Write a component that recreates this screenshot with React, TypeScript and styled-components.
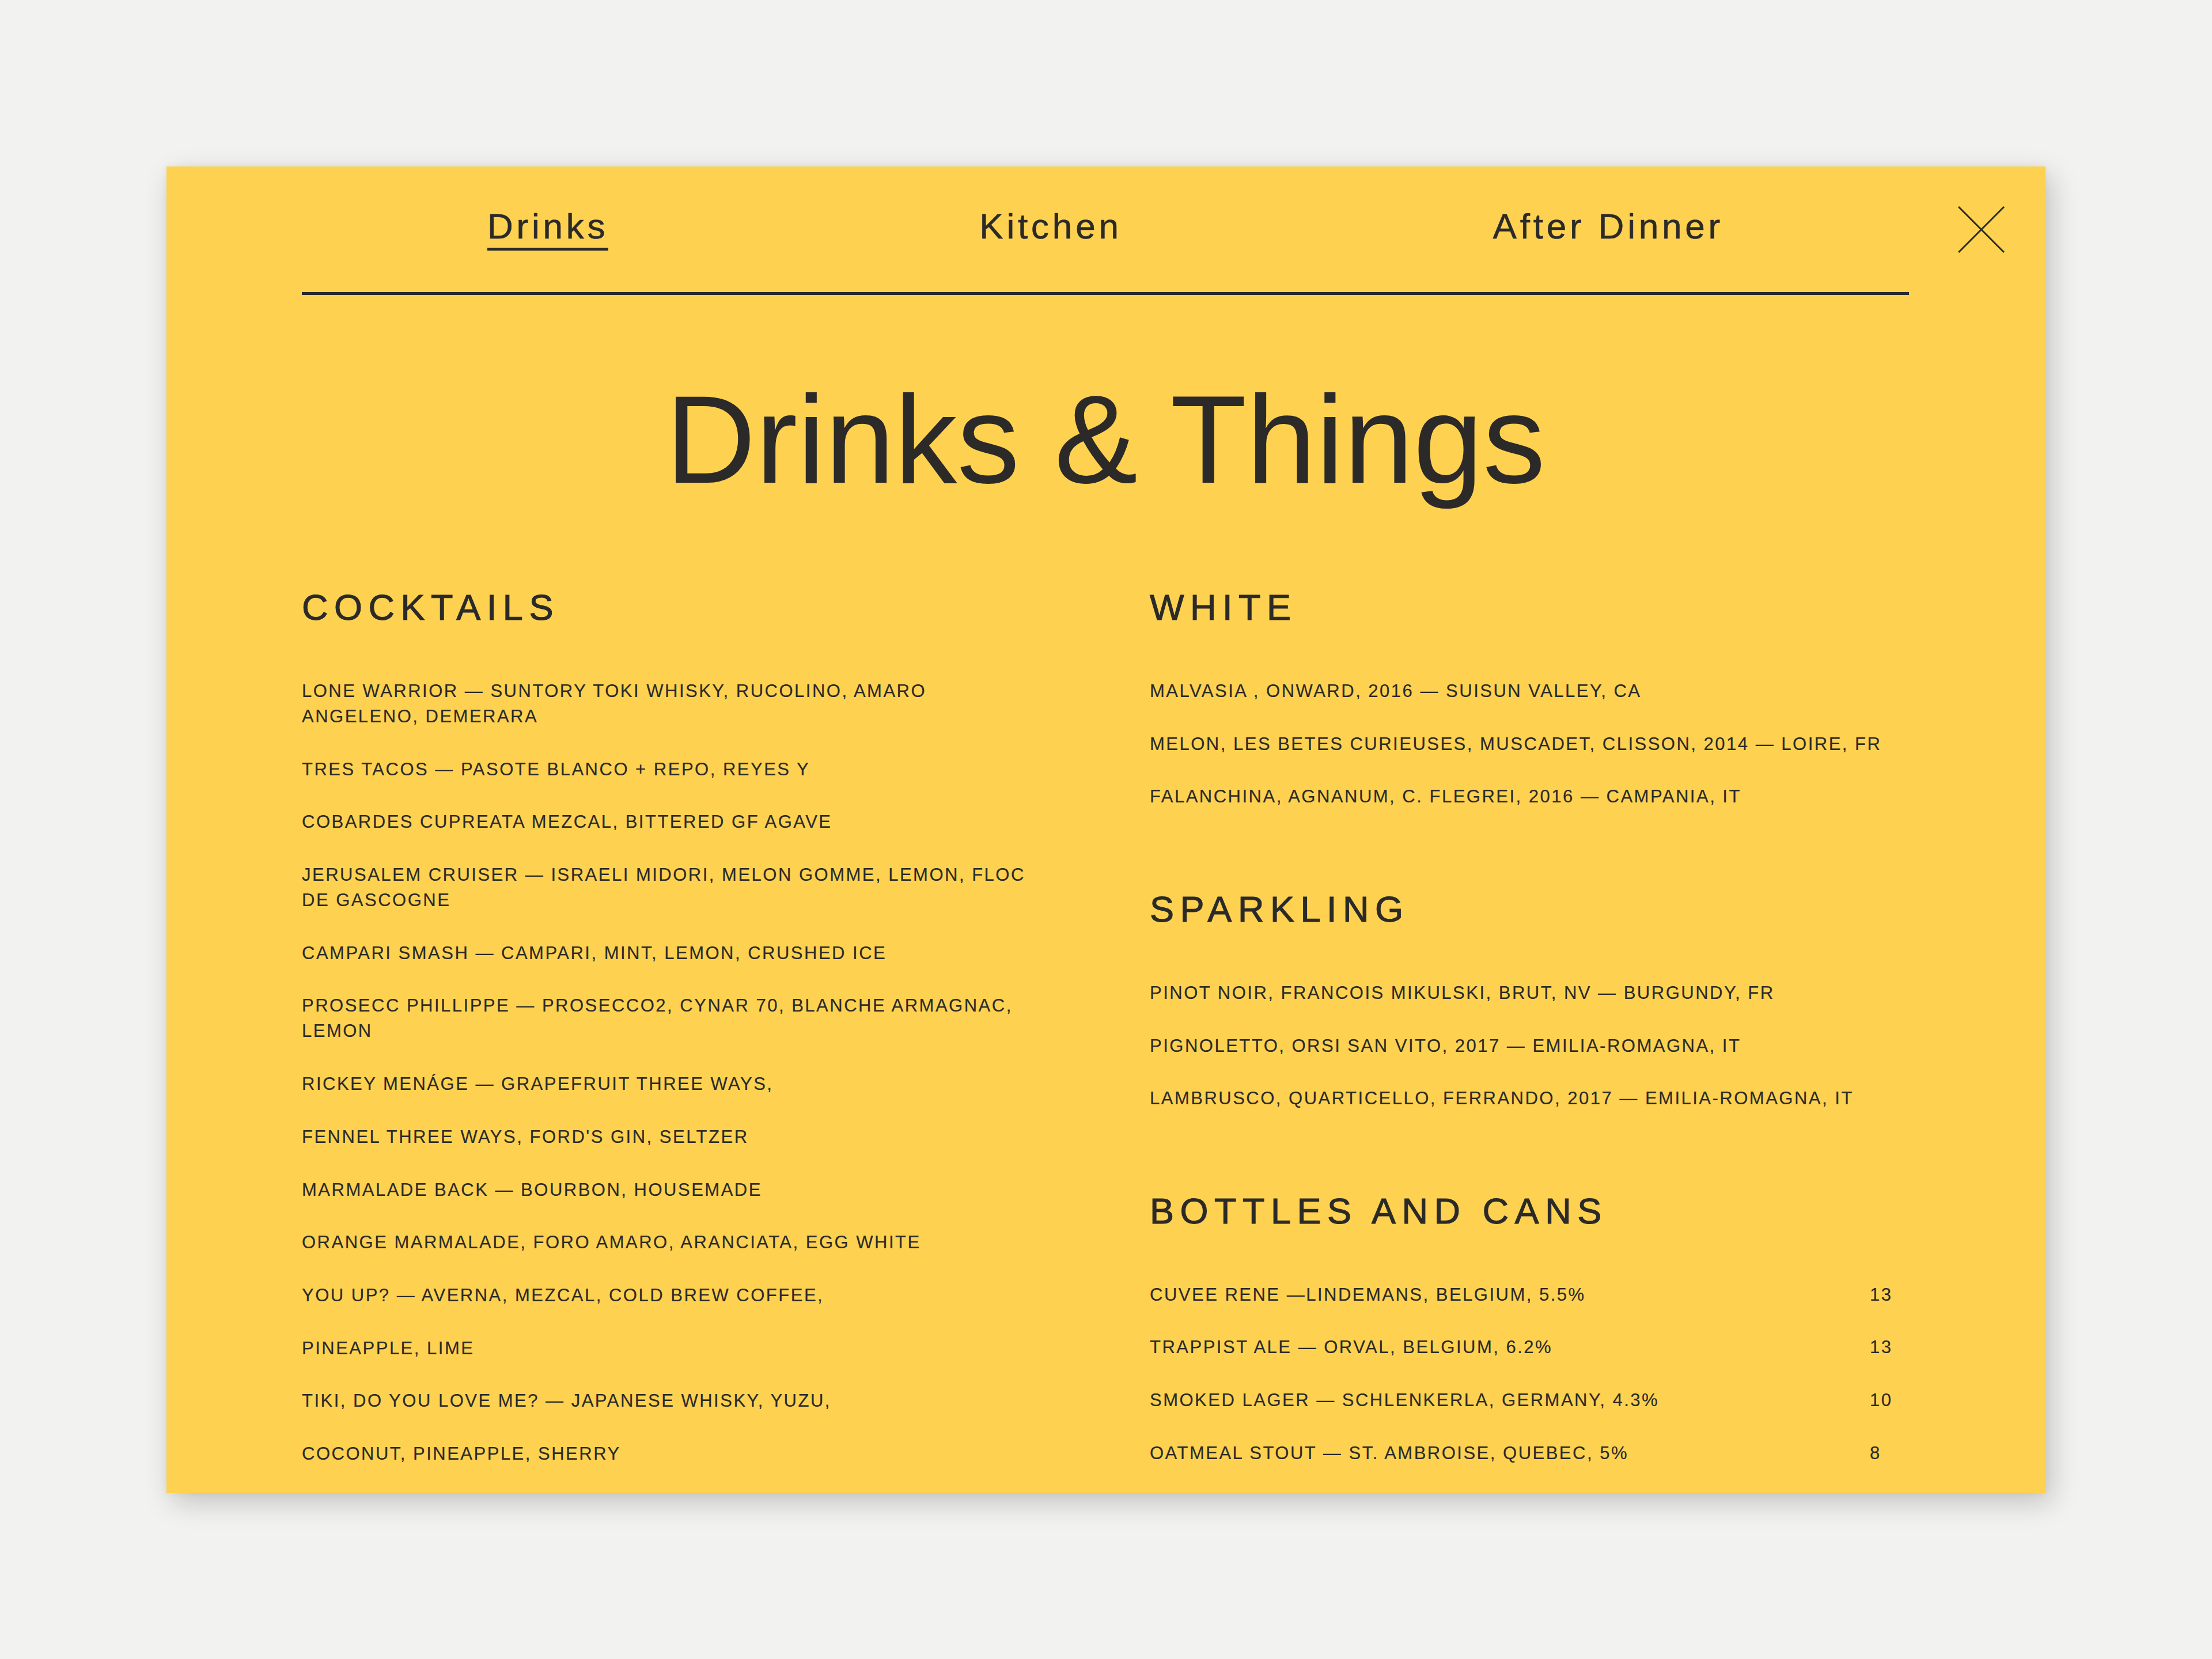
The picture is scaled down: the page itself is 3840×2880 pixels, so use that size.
import React from "react";
import styled, {createGlobalStyle} from "styled-components";

const ink = "#2b2a29";
const yellow = "#fed250";

const GlobalStyle = createGlobalStyle`
  html, body {
    margin: 0;
    padding: 0;
    background: #f2f3f1;
  }

  body {
    font-family: "Liberation Sans", Arial, sans-serif;
    color: ${ink};
  }
`;

const Page = styled.div`
  width: 3840px;
  min-height: 2880px;
  box-sizing: border-box;
  padding: 289px 0 0 289px;
`;

const Card = styled.div`
  position: relative;
  width: 3262px;
  height: 2303px;
  box-sizing: border-box;
  padding: 0 237px 46px 235px;
  background: ${yellow};
  box-shadow: 10px 16px 46px rgba(0, 0, 0, 0.2), 0 0 12px rgba(0, 0, 0, 0.05);
  overflow: hidden;
`;

const Nav = styled.nav`
  display: flex;
  justify-content: space-around;
  padding: 73px 0 72px;
  border-bottom: 5px solid ${ink};
`;

const NavItem = styled.a<{ $active?: boolean }>`
  display: inline-block;
  font-size: 62px;
  line-height: 62px;
  letter-spacing: 5.8px;
  color: ${ink};
  text-decoration: none;
  -webkit-text-stroke: 0.6px ${ink};
  padding-bottom: 6px;
  border-bottom: 5px solid ${({$active}) => ($active ? ink : "transparent")};
`;

const CloseButton = styled.button`
  position: absolute;
  top: 69px;
  right: 71px;
  width: 81px;
  height: 81px;
  padding: 0;
  border: 0;
  background: none;
  cursor: pointer;

  svg {
    display: block;
  }
`;

const Title = styled.h1`
  margin: 144px 0 0;
  font-size: 217px;
  line-height: 214px;
  font-weight: 400;
  text-align: center;
`;

const Columns = styled.div`
  display: grid;
  grid-template-columns: 1318px 1318px;
  column-gap: 154px;
  margin-top: 153px;
`;

const Column = styled.div`
  display: flex;
  flex-direction: column;
  gap: 141.5px;
`;

const Section = styled.section`
  display: flex;
  flex-direction: column;
`;

const SectionTitle = styled.h2`
  margin: 0 0 92px;
  font-size: 63px;
  line-height: 63px;
  font-weight: 400;
  letter-spacing: 10.5px;
  -webkit-text-stroke: 1.1px ${ink};
`;

const ItemList = styled.ul`
  list-style: none;
  margin: 0;
  padding: 0;
  display: flex;
  flex-direction: column;
  gap: 47.7px;
`;

const Item = styled.li<{ $priced?: boolean }>`
  display: grid;
  grid-template-columns: ${({$priced}) => ($priced ? "1fr 68px" : "1fr")};
  font-size: 31px;
  line-height: 44px;
  letter-spacing: 2.5px;
  -webkit-text-stroke: 0.2px ${ink};
`;

const ItemText = styled.span`
  white-space: nowrap;
`;

const Price = styled.span`
  text-align: left;
`;

interface MenuItem {
    lines: string[];
    price?: string;
}

interface MenuSection {
    title: string;
    items: MenuItem[];
}

const cocktails: MenuSection = {
    title: "COCKTAILS",
    items: [
        {lines: ["LONE WARRIOR — SUNTORY TOKI WHISKY, RUCOLINO, AMARO", "ANGELENO, DEMERARA"]},
        {lines: ["TRES TACOS — PASOTE BLANCO + REPO, REYES Y"]},
        {lines: ["COBARDES CUPREATA MEZCAL, BITTERED GF AGAVE"]},
        {lines: ["JERUSALEM CRUISER — ISRAELI MIDORI, MELON GOMME, LEMON, FLOC", "DE GASCOGNE"]},
        {lines: ["CAMPARI SMASH — CAMPARI, MINT, LEMON, CRUSHED ICE"]},
        {lines: ["PROSECC PHILLIPPE — PROSECCO2, CYNAR 70, BLANCHE ARMAGNAC,", "LEMON"]},
        {lines: ["RICKEY MENÁGE — GRAPEFRUIT THREE WAYS,"]},
        {lines: ["FENNEL THREE WAYS, FORD'S GIN, SELTZER"]},
        {lines: ["MARMALADE BACK — BOURBON, HOUSEMADE"]},
        {lines: ["ORANGE MARMALADE, FORO AMARO, ARANCIATA, EGG WHITE"]},
        {lines: ["YOU UP? — AVERNA, MEZCAL, COLD BREW COFFEE,"]},
        {lines: ["PINEAPPLE, LIME"]},
        {lines: ["TIKI, DO YOU LOVE ME? — JAPANESE WHISKY, YUZU,"]},
        {lines: ["COCONUT, PINEAPPLE, SHERRY"]},
    ],
};

const wineAndBeer: MenuSection[] = [
    {
        title: "WHITE",
        items: [
            {lines: ["MALVASIA , ONWARD, 2016 — SUISUN VALLEY, CA"]},
            {lines: ["MELON, LES BETES CURIEUSES, MUSCADET, CLISSON, 2014 — LOIRE, FR"]},
            {lines: ["FALANCHINA, AGNANUM, C. FLEGREI, 2016 — CAMPANIA, IT"]},
        ],
    },
    {
        title: "SPARKLING",
        items: [
            {lines: ["PINOT NOIR, FRANCOIS MIKULSKI, BRUT, NV — BURGUNDY, FR"]},
            {lines: ["PIGNOLETTO, ORSI SAN VITO, 2017 — EMILIA-ROMAGNA, IT"]},
            {lines: ["LAMBRUSCO, QUARTICELLO, FERRANDO, 2017 — EMILIA-ROMAGNA, IT"]},
        ],
    },
    {
        title: "BOTTLES AND CANS",
        items: [
            {lines: ["CUVEE RENE —LINDEMANS, BELGIUM, 5.5%"], price: "13"},
            {lines: ["TRAPPIST ALE — ORVAL, BELGIUM, 6.2%"], price: "13"},
            {lines: ["SMOKED LAGER — SCHLENKERLA, GERMANY, 4.3%"], price: "10"},
            {lines: ["OATMEAL STOUT — ST. AMBROISE, QUEBEC, 5%"], price: "8"},
        ],
    },
];

function MenuBlock({section}: { section: MenuSection }) {
    return (
        <Section>
            <SectionTitle>{section.title}</SectionTitle>
            <ItemList>
                {section.items.map((item, i) => (
                    <Item key={i} $priced={!!item.price}>
                        <ItemText>
                            {item.lines.map((line, j) => (
                                <React.Fragment key={j}>
                                    {j > 0 && <br/>}
                                    {line}
                                </React.Fragment>
                            ))}
                        </ItemText>
                        {item.price && <Price>{item.price}</Price>}
                    </Item>
                ))}
            </ItemList>
        </Section>
    );
}

export default function App() {
    return (
        <>
            <GlobalStyle/>
            <Page>
                <Card>
                    <Nav>
                        <NavItem href="#" $active>Drinks</NavItem>
                        <NavItem href="#">Kitchen</NavItem>
                        <NavItem href="#">After Dinner</NavItem>
                    </Nav>
                    <CloseButton aria-label="Close">
                        <svg width="81" height="81" viewBox="0 0 81 81">
                            <line x1="1" y1="1" x2="80" y2="80" stroke={ink} strokeWidth="3"/>
                            <line x1="80" y1="1" x2="1" y2="80" stroke={ink} strokeWidth="3"/>
                        </svg>
                    </CloseButton>
                    <Title>Drinks &amp; Things</Title>
                    <Columns>
                        <Column>
                            <MenuBlock section={cocktails}/>
                        </Column>
                        <Column>
                            {wineAndBeer.map((section) => (
                                <MenuBlock key={section.title} section={section}/>
                            ))}
                        </Column>
                    </Columns>
                </Card>
            </Page>
        </>
    );
}
